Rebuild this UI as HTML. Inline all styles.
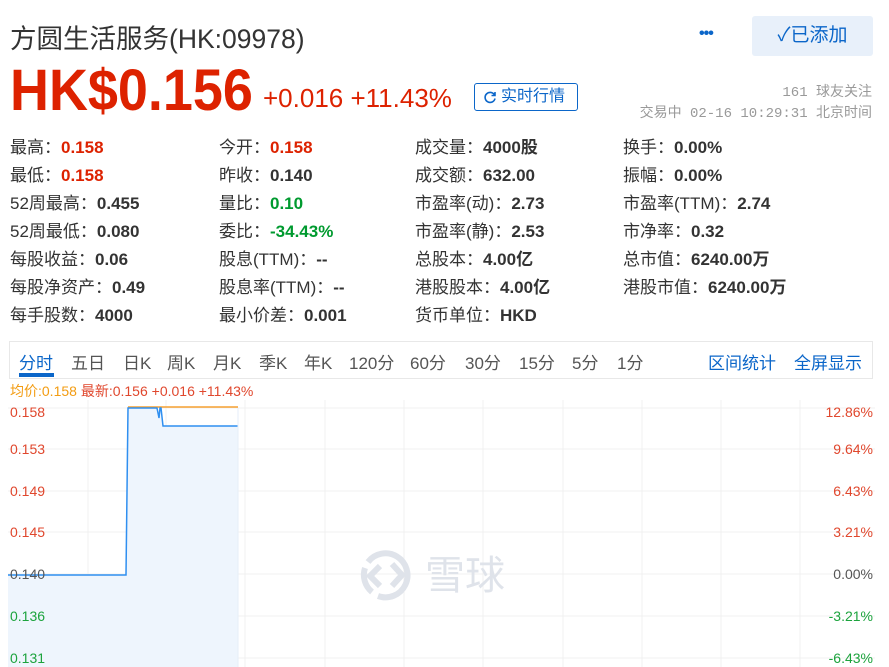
<!DOCTYPE html><html><head><meta charset="utf-8"><style>
*{margin:0;padding:0;box-sizing:border-box}
body{width:889px;height:667px;overflow:hidden;background:#fff;font-family:"Liberation Sans","Noto Sans CJK SC",sans-serif;color:#333;position:relative}
.a{position:absolute;white-space:nowrap}
.t{font-size:26.5px;color:#333;left:10px;top:17px}
.btn{left:752px;top:16px;width:121px;height:40px;background:#e8f0fa;border-radius:3px;color:#0b66c9;font-size:19px;line-height:40px;text-align:center}
.dots{left:699px;top:25px;font-size:16px;color:#0b66c9;letter-spacing:-1px;font-weight:bold}
.price{left:10px;top:57px;font-size:58px;font-weight:bold;color:#dd2200;transform:scaleX(0.93);transform-origin:left}
.chg{left:263px;top:83px;font-size:26px;color:#dd2200}
.rt{left:474px;top:83px;width:104px;height:28px;border:1px solid #0b66c9;border-radius:3px;color:#0b66c9;font-size:16px;line-height:26px;padding-left:26px}
.rt svg{position:absolute;left:8px;top:6px}
.gr{color:#999;font-size:14px;font-family:"Liberation Mono","Noto Sans CJK SC",monospace;right:17px;text-align:right}
.s{font-size:17px;color:#333}
.s b{font-weight:bold;color:#333}
.r{color:#dd2200!important}.g{color:#009a2f!important}
.tabs{left:9px;top:341px;width:864px;height:38px;border:1px solid #e8e8e8;font-size:17px;color:#555}
.tabs span{position:absolute;top:7px}
.ul{position:absolute;left:9px;top:31px;width:35px;height:4px;background:#0b66c9}
.yl{font-size:14px;color:#e0472d}
</style></head><body>
<div class="a t">方圆生活服务(HK:09978)</div>
<div class="a dots">•••</div>
<div class="a btn">✓已添加</div>
<div class="a price">HK$0.156</div>
<div class="a chg">+0.016 +11.43%</div>
<div class="a rt"><svg width="14" height="14" viewBox="0 0 14 14"><path d="M11.5 5A5 5 0 1 0 12 8.5M12 2v3.5H8.5" fill="none" stroke="#0b66c9" stroke-width="1.6"/></svg>实时行情</div>
<div class="a gr" style="top:81px">161 球友关注</div>
<div class="a gr" style="top:102px">交易中 02-16 10:29:31 北京时间</div>

<div class="a s" style="left:10px;top:133px">最高：<b class="r">0.158</b></div>
<div class="a s" style="left:10px;top:161px">最低：<b class="r">0.158</b></div>
<div class="a s" style="left:10px;top:189px">52周最高：<b>0.455</b></div>
<div class="a s" style="left:10px;top:217px">52周最低：<b>0.080</b></div>
<div class="a s" style="left:10px;top:245px">每股收益：<b>0.06</b></div>
<div class="a s" style="left:10px;top:273px">每股净资产：<b>0.49</b></div>
<div class="a s" style="left:10px;top:301px">每手股数：<b>4000</b></div>

<div class="a s" style="left:219px;top:133px">今开：<b class="r">0.158</b></div>
<div class="a s" style="left:219px;top:161px">昨收：<b>0.140</b></div>
<div class="a s" style="left:219px;top:189px">量比：<b class="g">0.10</b></div>
<div class="a s" style="left:219px;top:217px">委比：<b class="g">-34.43%</b></div>
<div class="a s" style="left:219px;top:245px">股息(TTM)：<b>--</b></div>
<div class="a s" style="left:219px;top:273px">股息率(TTM)：<b>--</b></div>
<div class="a s" style="left:219px;top:301px">最小价差：<b>0.001</b></div>

<div class="a s" style="left:415px;top:133px">成交量：<b>4000股</b></div>
<div class="a s" style="left:415px;top:161px">成交额：<b>632.00</b></div>
<div class="a s" style="left:415px;top:189px">市盈率(动)：<b>2.73</b></div>
<div class="a s" style="left:415px;top:217px">市盈率(静)：<b>2.53</b></div>
<div class="a s" style="left:415px;top:245px">总股本：<b>4.00亿</b></div>
<div class="a s" style="left:415px;top:273px">港股股本：<b>4.00亿</b></div>
<div class="a s" style="left:415px;top:301px">货币单位：<b>HKD</b></div>

<div class="a s" style="left:623px;top:133px">换手：<b>0.00%</b></div>
<div class="a s" style="left:623px;top:161px">振幅：<b>0.00%</b></div>
<div class="a s" style="left:623px;top:189px">市盈率(TTM)：<b>2.74</b></div>
<div class="a s" style="left:623px;top:217px">市净率：<b>0.32</b></div>
<div class="a s" style="left:623px;top:245px">总市值：<b>6240.00万</b></div>
<div class="a s" style="left:623px;top:273px">港股市值：<b>6240.00万</b></div>

<div class="a tabs">
<span style="left:9px;color:#0b66c9">分时</span><div class="ul"></div>
<span style="left:61px">五日</span><span style="left:113px">日K</span><span style="left:157px">周K</span><span style="left:203px">月K</span><span style="left:249px">季K</span><span style="left:294px">年K</span><span style="left:339px">120分</span><span style="left:400px">60分</span><span style="left:455px">30分</span><span style="left:509px">15分</span><span style="left:562px">5分</span><span style="left:607px">1分</span>
<span style="left:698px;color:#0b66c9">区间统计</span><span style="left:784px;color:#0b66c9">全屏显示</span>
</div>
<div class="a" style="left:10px;top:381px;font-size:14px"><span style="color:#f39c12">均价:0.158</span> <span style="color:#e0472d">最新:0.156 +0.016 +11.43%</span></div>

<svg class="a" style="left:0;top:400px" width="889" height="267">
<g stroke="#f0f0f0" stroke-width="1">
<line x1="8" y1="8" x2="875" y2="8"/><line x1="8" y1="49" x2="875" y2="49"/><line x1="8" y1="91" x2="875" y2="91"/><line x1="8" y1="132" x2="875" y2="132"/><line x1="8" y1="174" x2="875" y2="174"/><line x1="8" y1="216" x2="875" y2="216"/><line x1="8" y1="258" x2="875" y2="258"/>
<line x1="88" y1="0" x2="88" y2="267"/><line x1="166" y1="0" x2="166" y2="267"/><line x1="245" y1="0" x2="245" y2="267"/><line x1="325" y1="0" x2="325" y2="267"/><line x1="404" y1="0" x2="404" y2="267"/><line x1="483" y1="0" x2="483" y2="267"/><line x1="563" y1="0" x2="563" y2="267"/><line x1="642" y1="0" x2="642" y2="267"/><line x1="721" y1="0" x2="721" y2="267"/><line x1="800" y1="0" x2="800" y2="267"/>
</g>
<path d="M8 175H126L128 8H157L159 18L160 8H161L163 26H238V267H8Z" fill="#eef5fd"/>
<path d="M128 7H238" stroke="#f5a030" stroke-width="1.5" fill="none"/>
<path d="M8 175H126L128 8H157L159 18L160 8H161L163 26H238" stroke="#2f8ff0" stroke-width="1.5" fill="none"/>
<line x1="238" y1="8" x2="238" y2="267" stroke="#e6eef8"/>
<g fill="none" stroke="#dfe3ea" stroke-width="6"><path d="M368 162A22 22 0 1 1 378 196"/><path d="M372 192A22 22 0 0 1 365 168"/><path d="M380 166L370 176 380 186M392 164L402 175 392 186"/></g>
<text x="425" y="189" font-size="40" fill="#dfe3ea" font-family="Noto Sans CJK SC,sans-serif">雪球</text>
</svg>
<div class="a yl" style="left:10px;top:404px">0.158</div>
<div class="a yl" style="left:10px;top:441px">0.153</div>
<div class="a yl" style="left:10px;top:483px">0.149</div>
<div class="a yl" style="left:10px;top:524px">0.145</div>
<div class="a yl" style="left:10px;top:566px;color:#555">0.140</div>
<div class="a yl" style="left:10px;top:608px;color:#1ca33d">0.136</div>
<div class="a yl" style="left:10px;top:650px;color:#1ca33d">0.131</div>
<div class="a yl" style="right:16px;top:404px">12.86%</div>
<div class="a yl" style="right:16px;top:441px">9.64%</div>
<div class="a yl" style="right:16px;top:483px">6.43%</div>
<div class="a yl" style="right:16px;top:524px">3.21%</div>
<div class="a yl" style="right:16px;top:566px;color:#555">0.00%</div>
<div class="a yl" style="right:16px;top:608px;color:#1ca33d">-3.21%</div>
<div class="a yl" style="right:16px;top:650px;color:#1ca33d">-6.43%</div>
</body></html>
